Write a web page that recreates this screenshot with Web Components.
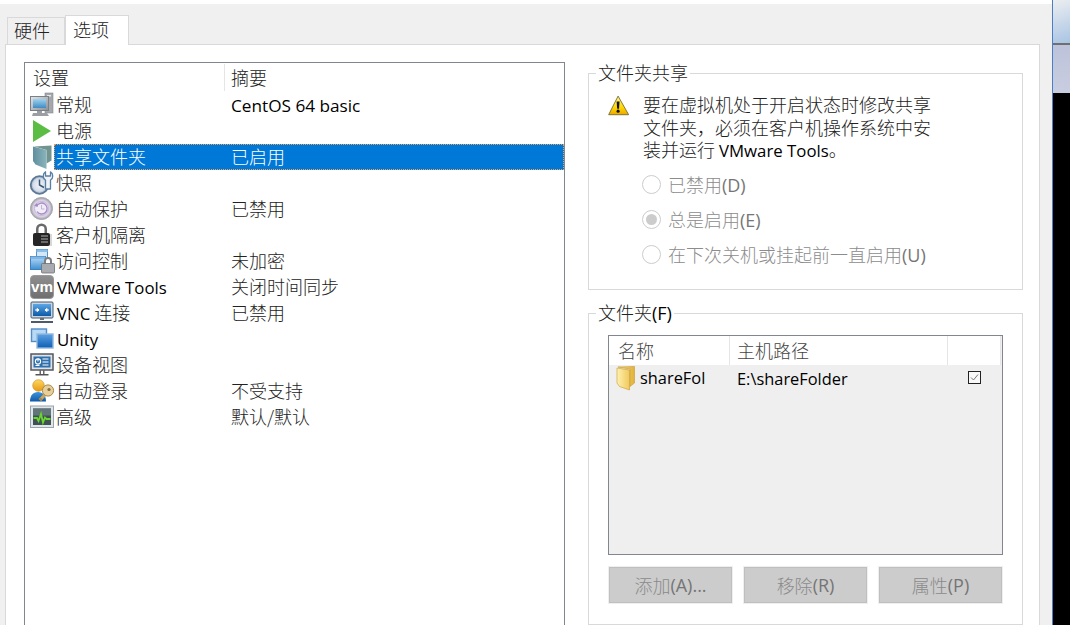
<!DOCTYPE html>
<html lang="zh">
<head>
<meta charset="utf-8">
<title>虚拟机设置</title>
<style>
html,body{margin:0;height:625px;overflow:hidden;background:#fff}
body{display:flex;align-items:stretch;font:300 18px "Noto Sans CJK SC","Noto Sans",sans-serif;color:#222}
</style>
</head>
<body>
<vm-window>
  <vm-tabs slot="tabs">
    <vm-tab>硬件</vm-tab>
    <vm-tab active>选项</vm-tab>
  </vm-tabs>
  <vm-settings>
    <vm-row icon="general">常规<span slot="summary"><vm-en style="--en-size:17.2px">CentOS 64 basic</vm-en></span></vm-row>
    <vm-row icon="power">电源</vm-row>
    <vm-row icon="share" selected>共享文件夹<span slot="summary">已启用</span></vm-row>
    <vm-row icon="snapshot">快照</vm-row>
    <vm-row icon="protect">自动保护<span slot="summary">已禁用</span></vm-row>
    <vm-row icon="lock">客户机隔离</vm-row>
    <vm-row icon="access">访问控制<span slot="summary">未加密</span></vm-row>
    <vm-row icon="tools"><vm-en style="--en-size:16.8px;margin-left:1px">VMware Tools</vm-en><span slot="summary">关闭时间同步</span></vm-row>
    <vm-row icon="vnc"><vm-en style="--en-size:16.8px;margin-left:1px">VNC</vm-en> 连接<span slot="summary">已禁用</span></vm-row>
    <vm-row icon="unity"><vm-en style="--en-size:16.8px;margin-left:1px">Unity</vm-en></vm-row>
    <vm-row icon="device">设备视图</vm-row>
    <vm-row icon="login">自动登录<span slot="summary">不受支持</span></vm-row>
    <vm-row icon="advanced">高级<span slot="summary">默认/默认</span></vm-row>
  </vm-settings>
  <vm-side slot="side">
    <vm-group legend="文件夹共享">
      <vm-warning>
        <vm-line>要在虚拟机处于开启状态时修改共享</vm-line>
        <vm-line>文件夹，必须在客户机操作系统中安</vm-line>
        <vm-line>装并运行 <vm-en style="--en-size:16.8px">VMware Tools</vm-en>。</vm-line>
      </vm-warning>
      <vm-radio>已禁用<vm-en tone="muted">(D)</vm-en></vm-radio>
      <vm-radio checked>总是启用<vm-en tone="muted">(E)</vm-en></vm-radio>
      <vm-radio>在下次关机或挂起前一直启用<vm-en tone="muted">(U)</vm-en></vm-radio>
    </vm-group>
    <vm-group legend="文件夹" accel="(F)" variant="folders">
      <vm-folders></vm-folders>
      <vm-buttons>
        <vm-button>添加<vm-en tone="muted">(A)...</vm-en></vm-button>
        <vm-button>移除<vm-en tone="muted">(R)</vm-en></vm-button>
        <vm-button>属性<vm-en tone="muted">(P)</vm-en></vm-button>
      </vm-buttons>
    </vm-group>
  </vm-side>
</vm-window>
<vm-strip></vm-strip>

<script>
const ICONS = {
general:`<defs><linearGradient id="a" x1="0" y1="0" x2="1" y2="1"><stop offset="0" stop-color="#e4e6e8"/><stop offset="1" stop-color="#8a8f95"/></linearGradient><linearGradient id="b" x1="0" y1="0" x2="0" y2="1"><stop offset="0" stop-color="#9fd2ee"/><stop offset="1" stop-color="#3f8cc4"/></linearGradient></defs>
<rect x="15" y="0" width="8" height="20" fill="#a4a8ad" stroke="#85898e" stroke-width=".6"/><rect x="17" y="2" width="4" height="1.5" fill="#e8e8e8"/>
<rect x="0.5" y="3.5" width="18" height="14" fill="url(#a)" stroke="#7b8086"/><rect x="3" y="6" width="13" height="9" fill="url(#b)"/>
<path d="M7 18h5v2H7zM3 20h14l2 3H2z" fill="#9b9fa4"/>`,
power:`<polygon points="3,1 21,12 3,23" fill="#5cbd45"/>`,
share:`<defs><linearGradient id="a" x1="0" y1="0" x2="1" y2="0"><stop offset="0" stop-color="#5f8f9e"/><stop offset="1" stop-color="#8ab4bb"/></linearGradient></defs>
<path d="M4 1.500 21.500 .5v15l-5 3V5z" fill="#72948f"/><path d="M3 1.500l13.500 3.500v19L5.500 19.500 3 16z" fill="url(#a)"/>`,
snapshot:`<defs><radialGradient id="a"><stop offset="0" stop-color="#f4f6f8"/><stop offset=".7" stop-color="#d5deea"/><stop offset="1" stop-color="#8fa6c2"/></radialGradient></defs>
<circle cx="9.500" cy="14" r="8.800" fill="url(#a)" stroke="#5d7894" stroke-width="1.800"/><path d="M9.500 8.500v5.500l4.500 2.500" fill="none" stroke="#3d5673" stroke-width="1.500"/>
<path d="M15.500 9C12.500 7.500 12.500 2.500 15.500 .8V5h5V.8C23.500 2.500 23.500 7.500 20.500 9v9h-5z" fill="#eef3f8" stroke="#5b7fa3" stroke-width="1.300" stroke-linejoin="round"/>`,
protect:`<defs><radialGradient id="a"><stop offset="0" stop-color="#f1eef6"/><stop offset=".75" stop-color="#d8d2e2"/><stop offset="1" stop-color="#a09ca8"/></radialGradient></defs>
<circle cx="11.500" cy="11.500" r="11" fill="url(#a)" stroke="#a6a6ac"/><circle cx="11.500" cy="11.500" r="7" fill="#f0edf6" stroke="#c4b4da" stroke-width="1"/>
<path d="M6.500 9.500a5.500 5.500 0 1 1 .5 5" fill="none" stroke="#a58ac6" stroke-width="1.300"/><path d="M4 9l4 .5-1-3.500z" fill="#a58ac6"/><path d="M11.500 8v4h3" fill="none" stroke="#c2b4d8" stroke-width="1"/>`,
lock:`<path d="M6 10V6a5.500 5.500 0 0 1 11 0v4h-2.500V6a3 3 0 0 0-6 0v4z" fill="#6a6a6a"/><rect x="3" y="10" width="17" height="13" rx="2" fill="#262626"/><path d="M11 13h7M11 16h7M11 19h7" stroke="#b0b0b0" stroke-width="1"/><rect x="20" y="11" width="2" height="12" fill="#d8d8d8"/>`,
access:`<defs><linearGradient id="a" x1="0" y1="0" x2="0" y2="1"><stop offset="0" stop-color="#bcdcf5"/><stop offset="1" stop-color="#3d8fd3"/></linearGradient></defs>
<rect x="6.500" y=".5" width="11" height="9" fill="#d3e7f8" stroke="#4f92cf"/><rect x="6.500" y=".5" width="11" height="2.500" fill="#8cbfe8"/>
<rect x=".5" y="7.500" width="15" height="13" fill="url(#a)" stroke="#3c80bd"/><rect x=".5" y="7.500" width="15" height="2.500" fill="#7fb7e6"/>
<path d="M14 15v-3a4 4 0 0 1 8 0v3h-2v-3a2 2 0 0 0-4 0v3z" fill="#7a7d82"/><rect x="11.500" y="14.500" width="13" height="9.500" rx="1" fill="#a8abb0" stroke="#6d7074" stroke-width=".8"/>`,
vnc:`<defs><linearGradient id="a" x1="0" y1="0" x2="0" y2="1"><stop offset="0" stop-color="#5ba7e6"/><stop offset="1" stop-color="#0d5aa8"/></linearGradient></defs>
<rect x="1" y="1" width="22" height="16" rx="1" fill="#cfd4d9" stroke="#3c5a7a"/><rect x="3" y="3" width="18" height="12" fill="url(#a)"/>
<path d="M5 9h4M9 9l-2-1.500v3zM19 9h-4M15 9l2-1.500v3z" stroke="#fff" stroke-width="1" fill="#fff"/><path d="M10 17h4v2h-4z" fill="#6a7077"/><path d="M1 20h22v2H1z" fill="#4c5c6b"/>`,
unity:`<defs><linearGradient id="a" x1="0" y1="0" x2="0" y2="1"><stop offset="0" stop-color="#5da1e2"/><stop offset="1" stop-color="#0f5fb5"/></linearGradient></defs>
<rect x="1.500" y="2" width="15" height="12.500" fill="#b9d8f4" stroke="#4f8ec9" stroke-width="1.400"/><rect x="7" y="7" width="16" height="14" fill="url(#a)" stroke="#8fb8df" stroke-width="1.400"/>`,
device:`<rect x="1" y="1" width="22" height="16" fill="#dfe3e8" stroke="#54585e" stroke-width="1.500"/><rect x="3.500" y="3.500" width="17" height="11" fill="#2d70ad"/>
<circle cx="8" cy="8.500" r="2.600" fill="none" stroke="#fff" stroke-width="1.100"/><path d="M8 5.500v3" stroke="#fff" stroke-width="1.100"/><path d="M12.500 6h6M12.500 9h6M12.500 12h6M5.500 12.500h4" stroke="#fff" stroke-width="1.100"/>
<path d="M9.500 17h1.500v4H9.500zM13 17h1.500v4H13z" fill="#666"/><path d="M5.500 21h13v1.500h-13z" fill="#555"/>`,
login:`<defs><linearGradient id="a" x1="0" y1="0" x2="0" y2="1"><stop offset="0" stop-color="#ffd75e"/><stop offset="1" stop-color="#e59a16"/></linearGradient><linearGradient id="b" x1="0" y1="0" x2="0" y2="1"><stop offset="0" stop-color="#3c93dc"/><stop offset="1" stop-color="#0f5aa8"/></linearGradient></defs>
<path d="M0 22.500c0-6 3-9.500 8-9.500s8 3.500 8 9.500z" fill="url(#b)"/><circle cx="8.500" cy="6.500" r="5.800" fill="url(#a)" stroke="#c98a15" stroke-width=".6"/>
<path d="M10 21l7.500-8" stroke="#c8a560" stroke-width="3.200"/><circle cx="18" cy="11.500" r="5.600" fill="#e6cf9c" stroke="#a88746"/><circle cx="19" cy="10.500" r="1.600" fill="#8a6d35"/><path d="M11 22l-2.500-2 2-1.500 2.500 2z" fill="#a88746"/>`,
advanced:`<rect x=".5" y="1" width="23" height="21.500" fill="#dfe6ea" stroke="#98a3ab"/><rect x="3" y="3.500" width="18" height="16.500" fill="#3f5152"/><rect x="3" y="3.500" width="18" height="7" fill="#62767a"/>
<path d="M3.500 13h3.500l1.500 3 2.500-7 2 8.500 2-5 1.500 1.500h4" fill="none" stroke="#69d62f" stroke-width="1.800"/>`,
warn:`<defs><linearGradient id="a" x1="0" y1="0" x2="0" y2="1"><stop offset="0" stop-color="#fff59a"/><stop offset=".6" stop-color="#ffd800"/><stop offset="1" stop-color="#eda800"/></linearGradient></defs>
<path d="M11 1.200 22.500 21.500H.7z" fill="url(#a)" stroke="#6b6326" stroke-width=".9" stroke-linejoin="round"/><path d="M9.400 7h3.200l-.6 8H10z" fill="#111"/><circle cx="11" cy="17.600" r="1.700" fill="#111"/>`,
folder:`<defs><linearGradient id="a" x1="0" y1="0" x2="1" y2="0"><stop offset="0" stop-color="#f5dc82"/><stop offset="1" stop-color="#e3b33c"/></linearGradient><linearGradient id="b" x1="0" y1="0" x2="1" y2="0"><stop offset="0" stop-color="#fff1b0"/><stop offset="1" stop-color="#f0c95b"/></linearGradient></defs>
<path d="M2 1 18.500 .5V17l-4.500 3.500V3z" fill="url(#a)" stroke="#c79a2c" stroke-width=".6"/><path d="M1 2l12.500 2v20L3.500 20.500 1 17z" fill="url(#b)" stroke="#c79a2c" stroke-width=".6"/>`
};

function def(name, css, html){
  customElements.define(name, class extends HTMLElement{
    constructor(){
      super();
      this.attachShadow({mode:'open'});
    }
    connectedCallback(){
      const r=this.shadowRoot;
      if(r.childNodes.length) return;
      r.innerHTML=`<style>${css}</style>${typeof html==='function'?html(this):html}`;
    }
  });
}

def('vm-en',`:host{display:inline-block;font:400 var(--en-size,16.4px) "Open Sans","Noto Sans",sans-serif;line-height:inherit;color:var(--en-color,#000);white-space:nowrap}
:host([tone=muted]){color:#757575;font-size:18px}`,`<slot></slot>`);

def('vm-line',`:host{display:block;height:22.5px;line-height:22.5px;white-space:nowrap}`,`<slot></slot>`);

def('vm-icon',`:host{display:block;flex:none;width:24px;height:24px}svg{display:block;width:100%;height:100%;overflow:visible}
text{font:700 15px "Liberation Sans",sans-serif;fill:#fff}`,e=>{
  const n=e.getAttribute('name');
  const body = n==='tools'
   ? `<defs><linearGradient id="a" x1="0" y1="0" x2="0" y2="1"><stop offset="0" stop-color="#8f8f8f"/><stop offset="1" stop-color="#6f6f6f"/></linearGradient></defs><rect x=".5" y=".5" width="23" height="23" rx="3.500" fill="url(#a)" stroke="#9a9a9a"/><text x="12" y="17" text-anchor="middle" textLength="22" lengthAdjust="spacingAndGlyphs">vm</text>`
   : ICONS[n];
  const vb = n==='folder' ? '0 0 19 24' : '0 0 24 24';
  return `<svg viewBox="${vb}" xmlns="http://www.w3.org/2000/svg">${body}</svg>`;
});

def('vm-window',`:host{display:flex;flex-direction:column;width:1052px;height:625px;overflow:hidden;background:#f0f0f0;border-top:4px solid #fff;box-sizing:border-box}
.panel{flex:none;height:640px;margin:0 12px 0 5px;background:#fff;border:1px solid #d9d9d9;box-sizing:border-box;padding:17px 0 0 18px;display:flex;gap:23px;align-items:flex-start}`,
`<slot name="tabs"></slot><div class="panel"><slot></slot><slot name="side"></slot></div>`);

def('vm-tabs',`:host{display:flex;align-items:flex-end;height:41px;margin:0 0 -1px 7px;position:relative;z-index:1;flex:none}`,`<slot></slot>`);

def('vm-tab',`:host{display:block;box-sizing:border-box;width:58px;height:27px;margin-bottom:1px;padding-left:6px;background:#f0f0f0;border:1px solid #d9d9d9;border-bottom:none;line-height:25px}
:host([active]){width:64px;height:30px;margin:0;padding-left:7px;background:#fff;line-height:26px}`,`<slot></slot>`);

def('vm-settings',`:host{display:block;flex:none;width:541px;height:640px;box-sizing:border-box;border:1px solid #82878f;background:#fff}
.h{display:grid;grid-template-columns:199px 1fr;height:29px;line-height:29px}
.h div{padding-left:8px}.h div+div{border-left:1px solid #e5e5e5;padding-left:6px;margin:1px 0;line-height:27px}`,
`<div class="h"><div>设置</div><div>摘要</div></div><slot></slot>`);

def('vm-row',`:host{display:flex;height:26px;line-height:24px}
vm-icon{margin:1px 0 0 5px}
.c{flex:1;display:flex;padding-left:2px;min-width:0}
.l{width:175px;flex:none;white-space:nowrap}
:host([selected]) .c{background:#0078d7;color:#fff;outline:1px dotted #f0a050;outline-offset:-1px}`,
e=>`<vm-icon name="${e.getAttribute('icon')}"></vm-icon><div class="c"><div class="l"><slot></slot></div><div><slot name="summary"></slot></div></div>`);

def('vm-side',`:host{display:flex;flex-direction:column;gap:12px;flex:none;width:435px}`,`<slot></slot>`);

def('vm-group',`:host{display:block}
fieldset{margin:0;padding:8px 0 17px 18px;border:1px solid #d9d9d9;min-width:0;box-sizing:border-box}
legend{margin-left:-11px;padding:0 2px;height:23px;line-height:21px;white-space:nowrap}
:host([variant=folders]) fieldset{padding:10px 19px 21px}
:host([variant=folders]) legend{margin-left:-12px}`,
e=>`<fieldset><legend>${e.getAttribute('legend')}${e.getAttribute('accel')?`<vm-en style="--en-size:18px">${e.getAttribute('accel')}</vm-en>`:''}</legend><slot></slot></fieldset>`);

def('vm-warning',`:host{display:flex;gap:13px;margin-bottom:6px}
vm-icon{width:22px;height:22px;margin:2px 0 0 1px}
.t{width:290px}`,`<vm-icon name="warn"></vm-icon><div class="t"><slot></slot></div>`);

def('vm-radio',`:host{display:flex;align-items:center;gap:7px;height:35px;padding-left:35px;color:#8c8c8c;white-space:nowrap}
i{flex:none;box-sizing:border-box;width:19px;height:19px;border:1px solid #ccc;border-radius:50%;display:grid;place-items:center}
:host([checked]) i::after{content:"";width:11px;height:11px;border-radius:50%;background:#ccc}`,`<i></i><span><slot></slot></span>`);

def('vm-folders',`:host{display:block;box-sizing:border-box;height:220px;border:1px solid #82878f;background:#efefef}
.h{display:grid;grid-template-columns:121px 218px 53px;width:392px;height:29px;background:#fff;line-height:29px;color:#444}
.h div{box-sizing:border-box;border-right:1px solid #e5e5e5;padding-left:7px}
.h div:first-child{padding-left:9px}
.r{display:grid;grid-template-columns:121px 218px 1fr;height:27px;line-height:26px}
.n{display:flex;padding-left:7px;gap:5px}
vm-icon{width:19px;height:24px;margin-top:1px}
.p{padding-left:7px;line-height:25px}
.k{padding:6px 0 0 20px}
.k svg{display:block;width:13px;height:13px}`,
`<div class="h"><div>名称</div><div>主机路径</div><div></div></div>
<div class="r"><div class="n"><vm-icon name="folder"></vm-icon><vm-en>shareFol</vm-en></div><div class="p"><vm-en>E:\\shareFolder</vm-en></div>
<div class="k"><svg viewBox="0 0 13 13"><rect x=".5" y=".5" width="12" height="12" fill="#f8f8f8" stroke="#222"/><path d="M3 6.500 5.500 9 10 3.500" fill="none" stroke="#777"/></svg></div></div>`);

def('vm-buttons',`:host{display:grid;grid-template-columns:repeat(3,123px);gap:12px;margin:12px 1px 0}`,`<slot></slot>`);

def('vm-button',`:host{display:flex;align-items:center;justify-content:center;box-sizing:border-box;height:36px;background:#ccc;border:1px solid #bfbfbf;color:#8a8a8a;outline:1px solid #efefef;white-space:nowrap}`,`<slot></slot>`);

def('vm-strip',`:host{display:flex;flex-direction:column;flex:none;width:18px;box-sizing:border-box;border-left:1px solid #4a7fc4}
.a{height:43px;background:linear-gradient(160deg,#eceef0,#a8c4e4)}
.b{height:2px;background:#6f6f6f}
.c{height:48px;background:linear-gradient(#bcc3da,#c9cde0)}
.d{flex:1;background:#000}`,`<div class="a"></div><div class="b"></div><div class="c"></div><div class="d"></div>`);
</script>
</body>
</html>
